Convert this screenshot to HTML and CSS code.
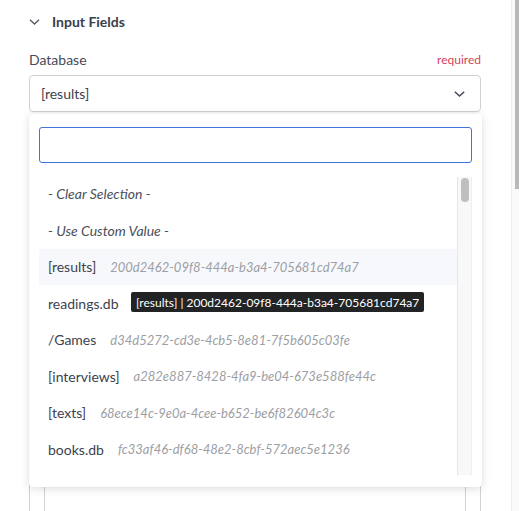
FILE: index.html
```html
<!DOCTYPE html>
<html>
<head>
<meta charset="utf-8">
<link rel="stylesheet" href="styles.css">
</head>
<body>
<div class="page">
  <div class="section-head">
    <svg class="chev-small" width="11" height="6" viewBox="0 0 11 6"><path d="M1 0.8 L5.5 5 L10 0.8" fill="none" stroke="#555b66" stroke-width="1.4"/></svg>
    <span class="section-title">Input Fields</span>
  </div>
  <div class="field">
    <div class="label-row">
      <span class="label">Database</span>
      <span class="required">required</span>
    </div>
    <div class="select">
      <span class="select-value">[results]</span>
      <svg class="chev" width="11" height="6" viewBox="0 0 11 6"><path d="M0.8 0.8 L5.5 5 L10.2 0.8" fill="none" stroke="#444a55" stroke-width="1.5"/></svg>
    </div>
    <div class="dropdown">
      <div class="search"></div>
      <div class="list">
        <div class="options">
          <div class="opt special">- Clear Selection -</div>
          <div class="opt special">- Use Custom Value -</div>
          <div class="opt hover"><span class="name">[results]</span><span class="id">200d2462-09f8-444a-b3a4-705681cd74a7</span></div>
          <div class="opt"><span class="name">readings.db</span><span class="id"></span></div>
          <div class="opt"><span class="name">/Games</span><span class="id">d34d5272-cd3e-4cb5-8e81-7f5b605c03fe</span></div>
          <div class="opt"><span class="name">[interviews]</span><span class="id">a282e887-8428-4fa9-be04-673e588fe44c</span></div>
          <div class="opt"><span class="name">[texts]</span><span class="id">68ece14c-9e0a-4cee-b652-be6f82604c3c</span></div>
          <div class="opt"><span class="name">books.db</span><span class="id">fc33af46-df68-48e2-8cbf-572aec5e1236</span></div>
        </div>
        <div class="scrollbar"><div class="thumb"></div></div>
      </div>
      <div class="tooltip">[results] | 200d2462-09f8-444a-b3a4-705681cd74a7</div>
    </div>
  </div>
  <div class="behind">
    <div class="behind-inner"></div>
  </div>
</div>
<div class="page-scroll"><div class="page-thumb"></div></div>
</body>
</html>
```
FILE: styles.css
```css
html, body {
  margin: 0;
  padding: 0;
  background: #fff;
  overflow: hidden;
}
body {
  font-family: Lato, "Open Sans", sans-serif;
  color: #3d424d;
  width: 519px;
  height: 511px;
}
.page {
  width: 512px;
  box-sizing: border-box;
  padding: 12px 31px 0 29px;
}
.section-head {
  display: flex;
  align-items: center;
  height: 18px;
  gap: 12px;
}
.chev-small { display: block; margin-top: 1px; }
.section-title {
  font-size: 14px;
  font-weight: 700;
  color: #3a3f4a;
}
.field {
  position: relative;
  margin-top: 20px;
}
.label-row {
  display: flex;
  justify-content: space-between;
  align-items: center;
  height: 18px;
}
.label {
  font-size: 14px;
  color: #454a55;
}
.required {
  font-size: 12px;
  color: #d2435b;
}
.select {
  margin-top: 7px;
  height: 37px;
  box-sizing: border-box;
  border: 1px solid #cfd1d6;
  border-radius: 4px;
  display: flex;
  align-items: center;
  justify-content: space-between;
  padding: 0 15px 1px 11px;
  box-shadow: 0 1px 1px rgba(0,0,0,0.04);
}
.select-value {
  font-size: 14px;
  color: #3d424d;
}
.chev { display: block; margin-top: 1px; }
.dropdown {
  position: absolute;
  top: 64px;
  left: 0;
  width: 453px;
  height: 373px;
  box-sizing: border-box;
  background: #fff;
  border-radius: 4px;
  box-shadow: 0 2px 10px rgba(0,0,0,0.13), 0 0 2px rgba(0,0,0,0.05);
  padding: 13px 10px 12px 10px;
  z-index: 5;
}
.search {
  height: 36px;
  box-sizing: border-box;
  border: 1px solid #4275d8;
  border-radius: 3px;
}
.list {
  margin-top: 14px;
  height: 298px;
  display: flex;
  overflow: hidden;
}
.options {
  flex: 1;
  margin-top: -1.5px;
}
.opt {
  height: 36.5px;
  display: flex;
  align-items: center;
  padding-left: 9px;
  font-size: 14px;
  color: #3d424d;
  white-space: nowrap;
}
.opt.special {
  font-style: italic;
  color: #4a4f5a;
}
.opt.hover {
  background: #f7f8fc;
}
.name {
  margin-right: 14px;
}
.id {
  font-style: italic;
  font-size: 13px;
  color: #9c9ea3;
}
.scrollbar {
  width: 15px;
  box-sizing: border-box;
  background: #f8f8f8;
  border-left: 1px solid #e6e6e6;
  border-right: 1px solid #eeeeee;
  padding: 1px 2px 0 3px;
}
.thumb {
  height: 24px;
  background: #bfbfbf;
  border-radius: 4px;
}
.tooltip {
  position: absolute;
  left: 102px;
  top: 178px;
  height: 20px;
  display: flex;
  align-items: center;
  padding: 0 5px;
  background: #222325;
  color: #fff;
  font-size: 12px;
  border-radius: 2px;
  white-space: nowrap;
}
.behind {
  margin-top: 360px;
  height: 60px;
  border: 1px solid #d2d2d2;
  border-bottom: none;
  padding: 0 14px;
}
.behind-inner {
  height: 60px;
  border-left: 1px solid #d2d2d2;
  border-right: 1px solid #d2d2d2;
}
.page-scroll {
  position: fixed;
  top: 0;
  right: 0;
  width: 7px;
  height: 511px;
  border-left: 1px solid #ececec;
  background: #fafafa;
}
.page-thumb {
  margin-left: 3px;
  width: 4px;
  height: 189px;
  background: #b9b9b9;
}
```
